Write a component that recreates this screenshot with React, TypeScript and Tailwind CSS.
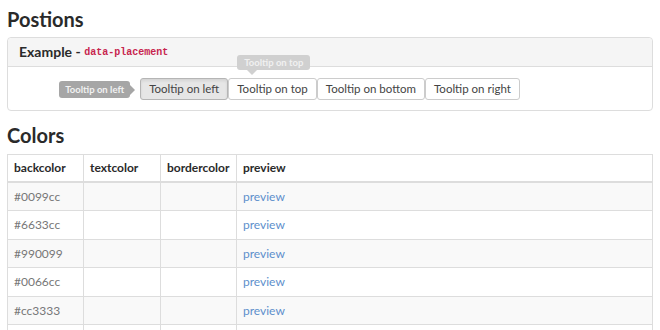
const font = { fontFamily: "Lato, 'Open Sans', sans-serif" };

const rows = ["#0099cc", "#6633cc", "#990099", "#0066cc", "#cc3333", "#339966"];

const buttons = ["Tooltip on left", "Tooltip on top", "Tooltip on bottom", "Tooltip on right"];

export default function App() {
  return (
    <div className="h-[330px] w-[660px] overflow-hidden bg-white px-[7px] text-[#333]" style={font}>
      <h2 className="mt-[7px] text-[20px] leading-[24px] font-bold text-[#2a2a2a]">Postions</h2>

      <div className="mt-[6px] rounded-[4px] border border-[#ddd]">
        <div className="flex h-[29px] items-center rounded-t-[4px] border-b border-[#ddd] bg-[#f5f5f5] px-[11px] text-[14px] leading-[20px] font-bold text-[#2a2a2a]">
          <span>Example -&nbsp;</span>
          <code
            className="pt-[1px] text-[10px] leading-[20px] font-bold text-[#c7254e]"
            style={{ fontFamily: "'Liberation Mono', monospace" }}
          >
            data-placement
          </code>
        </div>
        <div className="flex justify-center pt-[11px] pb-[10px]">
          <div className="flex">
            {buttons.map((b, i) => (
              <div key={b} className="relative">
                <button
                  className={`block h-[22px] rounded-[3px] border px-[8px] text-[11.5px] leading-[20px] text-[#444] ${
                    i === 0 ? "border-[#b5b5b5] bg-[#e6e6e6] shadow-[inset_0_2px_3px_rgba(0,0,0,0.08)]" : "border-[#ccc] bg-white"
                  }`}
                >
                  {b}
                </button>
                {i === 0 && (
                  <div className="absolute top-[3px] right-full mr-[5px] flex items-center">
                    <div className="h-[17px] whitespace-nowrap rounded-[3px] bg-[#a6a6a6] px-[6px] text-[9.5px] leading-[17px] font-bold text-[#f2f2f2]">
                      Tooltip on left
                    </div>
                    <div className="h-0 w-0 border-y-[5px] border-l-[5px] border-y-transparent border-l-[#a6a6a6]" />
                  </div>
                )}
                {i === 1 && (
                  <div className="absolute top-[-23px] left-[9px] flex flex-col">
                    <div className="h-[15px] whitespace-nowrap rounded-[3px] bg-[#d0d0d0] px-[7px] text-[9.5px] leading-[15px] font-bold text-[#f0f0f0]">
                      Tooltip on top
                    </div>
                    <div className="ml-[10px] h-0 w-0 border-x-[5px] border-t-[5px] border-x-transparent border-t-[#d0d0d0]" />
                  </div>
                )}
              </div>
            ))}
          </div>
        </div>
      </div>

      <h2 className="mt-[12px] text-[20px] leading-[24px] font-bold text-[#2a2a2a]">Colors</h2>

      <table className="mt-[7px] w-full table-fixed border border-[#ddd] text-[12px]">
        <colgroup>
          <col className="w-[76px]" />
          <col className="w-[77px]" />
          <col className="w-[76px]" />
          <col />
        </colgroup>
        <thead>
          <tr className="border-b-2 border-[#ddd] text-left">
            {["backcolor", "textcolor", "bordercolor", "preview"].map((h) => (
              <th key={h} className="border-r border-[#ddd] px-[6px] py-[4px] leading-[18px] font-bold text-[#2a2a2a]">
                {h}
              </th>
            ))}
          </tr>
        </thead>
        <tbody>
          {rows.map((c, i) => (
            <tr key={c} className={`border-b border-[#ddd] ${i % 2 === 0 ? "bg-[#f9f9f9]" : "bg-white"}`}>
              <td className="border-r border-[#ddd] px-[6px] py-[5px] leading-[17.4px] text-[#777]">{c}</td>
              <td className="border-r border-[#ddd] px-[6px] py-[5px] leading-[17.4px]"></td>
              <td className="border-r border-[#ddd] px-[6px] py-[5px] leading-[17.4px]"></td>
              <td className="px-[6px] py-[5px] leading-[17.4px]">
                <a className="text-[#5d8fcc]">preview</a>
              </td>
            </tr>
          ))}
        </tbody>
      </table>
    </div>
  );
}
